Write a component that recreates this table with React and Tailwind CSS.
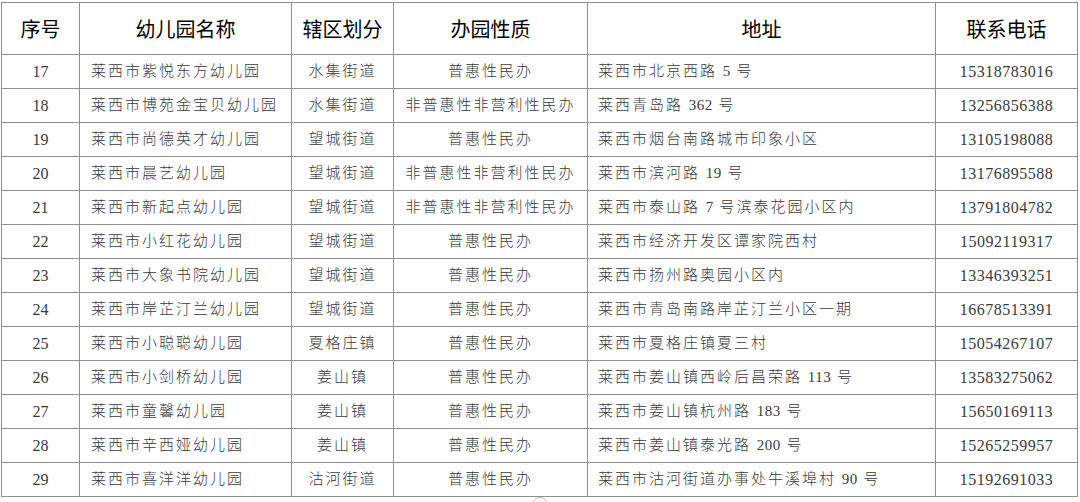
import React from 'react';

const rows = [
  ['17', '莱西市紫悦东方幼儿园', '水集街道', '普惠性民办', '莱西市北京西路 5 号', '15318783016'],
  ['18', '莱西市博苑金宝贝幼儿园', '水集街道', '非普惠性非营利性民办', '莱西青岛路 362 号', '13256856388'],
  ['19', '莱西市尚德英才幼儿园', '望城街道', '普惠性民办', '莱西市烟台南路城市印象小区', '13105198088'],
  ['20', '莱西市晨艺幼儿园', '望城街道', '非普惠性非营利性民办', '莱西市滨河路 19 号', '13176895588'],
  ['21', '莱西市新起点幼儿园', '望城街道', '非普惠性非营利性民办', '莱西市泰山路 7 号滨泰花园小区内', '13791804782'],
  ['22', '莱西市小红花幼儿园', '望城街道', '普惠性民办', '莱西市经济开发区谭家院西村', '15092119317'],
  ['23', '莱西市大象书院幼儿园', '望城街道', '普惠性民办', '莱西市扬州路奥园小区内', '13346393251'],
  ['24', '莱西市岸芷汀兰幼儿园', '望城街道', '普惠性民办', '莱西市青岛南路岸芷汀兰小区一期', '16678513391'],
  ['25', '莱西市小聪聪幼儿园', '夏格庄镇', '普惠性民办', '莱西市夏格庄镇夏三村', '15054267107'],
  ['26', '莱西市小剑桥幼儿园', '姜山镇', '普惠性民办', '莱西市姜山镇西岭后昌荣路 113 号', '13583275062'],
  ['27', '莱西市童馨幼儿园', '姜山镇', '普惠性民办', '莱西市姜山镇杭州路 183 号', '15650169113'],
  ['28', '莱西市辛西娅幼儿园', '姜山镇', '普惠性民办', '莱西市姜山镇泰光路 200 号', '15265259957'],
  ['29', '莱西市喜洋洋幼儿园', '沽河街道', '普惠性民办', '莱西市沽河街道办事处牛溪埠村 90 号', '15192691033'],
];

const headers = ['序号', '幼儿园名称', '辖区划分', '办园性质', '地址', '联系电话'];
const widths = ['w-[78px]', 'w-[212px]', 'w-[102px]', 'w-[194px]', 'w-[348px]', 'w-[142px]'];

// digits look like Times in the doc, Chinese a light song-ish face
const Mixed = ({ text }) =>
  text.split(/(\d+)/).map((part, i) =>
    /^\d+$/.test(part) ? (
      <span key={i} className="text-[15px] tracking-[0.5px]">{part}</span>
    ) : (
      <span key={i}>{part}</span>
    )
  );

export default function App() {
  return (
    <div className="relative w-[1080px] h-[502px] bg-white overflow-hidden">
      <table
        className="ml-[1px] mt-[2px] border-collapse table-fixed w-[1077px]"
        style={{ fontFamily: '"Liberation Serif", "Noto Sans CJK SC", serif' }}
      >
        <colgroup>
          {widths.map((w, i) => (
            <col key={i} className={w} />
          ))}
        </colgroup>
        <thead>
          <tr className="h-[52px]">
            {headers.map((h) => (
              <th
                key={h}
                className="border border-[#8f8f8f] text-center align-middle text-[20px] font-normal text-black"
                style={{ fontFamily: '"Noto Sans CJK SC", sans-serif' }}
              >
                {h}
              </th>
            ))}
          </tr>
        </thead>
        <tbody className="text-[15px] font-light text-[#3a3a3a]">
          {rows.map((r) => (
            <tr key={r[0]} className="h-[34px]">
              <td className="border border-[#8f8f8f] text-center align-middle text-[16px]">{r[0]}</td>
              <td className="border border-[#8f8f8f] pl-[11px] align-middle tracking-[2px] whitespace-nowrap">{r[1]}</td>
              <td className="border border-[#8f8f8f] text-center align-middle tracking-[2px] whitespace-nowrap">{r[2]}</td>
              <td className="border border-[#8f8f8f] text-center align-middle tracking-[2px] whitespace-nowrap">{r[3]}</td>
              <td className="border border-[#8f8f8f] pl-[10px] align-middle tracking-[2px] whitespace-nowrap">
                <Mixed text={r[4]} />
              </td>
              <td className="border border-[#8f8f8f] text-center align-middle text-[16px] tracking-[0.5px]">{r[5]}</td>
            </tr>
          ))}
        </tbody>
      </table>
      <div className="absolute left-[532px] top-[497px] w-[16px] h-[10px] rounded-t-full border border-[#bbb]" />
    </div>
  );
}
